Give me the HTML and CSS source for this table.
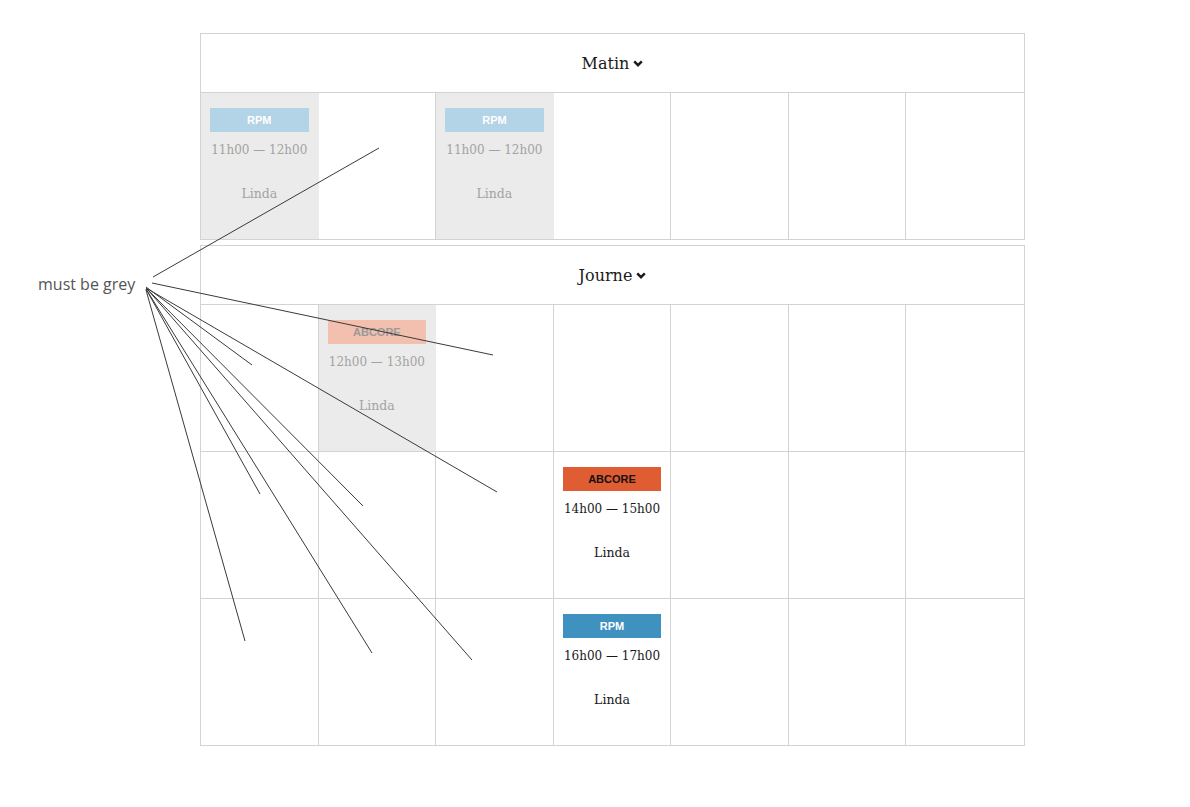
FILE: index.html
```html
<!DOCTYPE html>
<html lang="fr">
<head>
<meta charset="utf-8">
<title>Planning</title>
<link rel="stylesheet" href="styles.css">
</head>
<body>
<div class="page">
  <section class="block">
    <div class="block-head">Matin <svg class="chev" viewBox="0 0 10 7" width="10" height="7"><path d="M1.2 1.3 L5 5.2 L8.8 1.3" fill="none" stroke="#1a1a1a" stroke-width="2.4"/></svg></div>
    <div class="row">
      <div class="cell grey">
        <div class="event faded">
          <div class="badge rpm">RPM</div>
          <div class="time">11h00 — 12h00</div>
          <div class="who">Linda</div>
        </div>
      </div>
      <div class="cell"></div>
      <div class="cell grey">
        <div class="event faded">
          <div class="badge rpm">RPM</div>
          <div class="time">11h00 — 12h00</div>
          <div class="who">Linda</div>
        </div>
      </div>
      <div class="cell"></div>
      <div class="cell"></div>
      <div class="cell"></div>
      <div class="cell"></div>
    </div>
  </section>

  <section class="block">
    <div class="block-head">Journe <svg class="chev" viewBox="0 0 10 7" width="10" height="7"><path d="M1.2 1.3 L5 5.2 L8.8 1.3" fill="none" stroke="#1a1a1a" stroke-width="2.4"/></svg></div>
    <div class="row">
      <div class="cell"></div>
      <div class="cell grey">
        <div class="event faded">
          <div class="badge abcore">ABCORE</div>
          <div class="time">12h00 — 13h00</div>
          <div class="who">Linda</div>
        </div>
      </div>
      <div class="cell"></div>
      <div class="cell"></div>
      <div class="cell"></div>
      <div class="cell"></div>
      <div class="cell"></div>
    </div>
    <div class="row">
      <div class="cell"></div>
      <div class="cell"></div>
      <div class="cell"></div>
      <div class="cell">
        <div class="event">
          <div class="badge abcore">ABCORE</div>
          <div class="time">14h00 — 15h00</div>
          <div class="who">Linda</div>
        </div>
      </div>
      <div class="cell"></div>
      <div class="cell"></div>
      <div class="cell"></div>
    </div>
    <div class="row">
      <div class="cell"></div>
      <div class="cell"></div>
      <div class="cell"></div>
      <div class="cell">
        <div class="event">
          <div class="badge rpm">RPM</div>
          <div class="time">16h00 — 17h00</div>
          <div class="who">Linda</div>
        </div>
      </div>
      <div class="cell"></div>
      <div class="cell"></div>
      <div class="cell"></div>
    </div>
  </section>
</div>

<div class="note">must be grey</div>
<svg class="arrows" width="1190" height="807" viewBox="0 0 1190 807">
  <g stroke="#3a3a3a" stroke-width="1" fill="none">
    <line x1="153" y1="277" x2="379" y2="148"/>
    <line x1="152" y1="283" x2="493" y2="355"/>
    <line x1="146" y1="287" x2="252" y2="365"/>
    <line x1="146" y1="288" x2="497" y2="492"/>
    <line x1="146" y1="288" x2="363" y2="506"/>
    <line x1="146" y1="289" x2="260" y2="494"/>
    <line x1="146" y1="290" x2="245" y2="641"/>
    <line x1="146" y1="289" x2="372" y2="653"/>
    <line x1="147" y1="289" x2="472" y2="660"/>
  </g>
</svg>
</body>
</html>
```

FILE: styles.css
```css
html, body {
  margin: 0;
  padding: 0;
  background: #ffffff;
}

body {
  font-family: "DejaVu Serif", "Liberation Serif", serif;
  color: #1a1a1a;
}

.page {
  padding-top: 33px;
  padding-left: 200px;
  display: flex;
  flex-direction: column;
  gap: 5px;
}

.block {
  width: 823px;
  border: 1px solid #d3d3d3;
  display: flex;
  flex-direction: column;
}

.block-head {
  height: 59px;
  border-bottom: 1px solid #d3d3d3;
  display: flex;
  align-items: center;
  justify-content: center;
  gap: 4px;
  font-size: 16px;
  box-sizing: border-box;
}

.chev {
  display: block;
  margin-top: 1px;
}

.row {
  display: grid;
  grid-template-columns: repeat(7, 1fr);
  height: 146px;
}

.row + .row {
  border-top: 1px solid #d3d3d3;
}

.cell {
  border-right: 1px solid #d3d3d3;
  padding: 15px 9px 0 9px;
  box-sizing: border-box;
  min-width: 0;
}

.cell:last-child {
  border-right: none;
}

.cell.grey {
  background: #ebebeb;
  border-right-color: #ebebeb;
}

.event {
  display: flex;
  flex-direction: column;
  align-items: stretch;
  text-align: center;
}

.badge {
  height: 24px;
  display: flex;
  align-items: center;
  justify-content: center;
  font-family: "Liberation Sans", Arial, sans-serif;
  font-weight: bold;
  font-size: 11px;
  margin-bottom: 8px;
}

.badge.rpm {
  background: #3f91c0;
  color: #ffffff;
}

.badge.abcore {
  background: #e05c33;
  color: #111111;
}

.time {
  font-size: 12px;
  line-height: 20px;
  white-space: nowrap;
  color: #1a1a1a;
}

.who {
  font-size: 12.5px;
  line-height: 20px;
  margin-top: 24px;
  color: #1a1a1a;
}

.event.faded .time,
.event.faded .who {
  color: #a3a3a3;
}

.event.faded .badge.rpm {
  background: #b3d3e6;
  color: #ffffff;
}

.event.faded .badge.abcore {
  background: #f3bfae;
  color: #9a9a9a;
}

.note {
  position: absolute;
  left: 38px;
  top: 273px;
  font-family: "Open Sans", "Liberation Sans", sans-serif;
  font-size: 16px;
  line-height: 22px;
  color: #555555;
}

.arrows {
  position: absolute;
  left: 0;
  top: 0;
  pointer-events: none;
}
```
